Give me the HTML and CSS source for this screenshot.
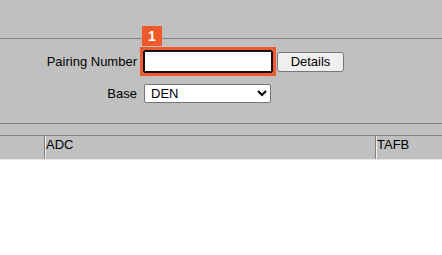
FILE: index.html
```html
<!DOCTYPE html>
<html lang="en">
<head>
    <meta charset="UTF-8">
    <meta name="viewport" content="width=device-width, initial-scale=1.0">
    <title>Pairing Lookup</title>
    <link rel="stylesheet" href="styles.css">
</head>
<body>

    <div class="top-bar"></div>

    <form class="pairing-form">
        <label for="pairing" class="form-label">Pairing Number</label>
        <div class="form-field">
            <div class="highlight">
                <span class="step-badge">1</span>
                <input type="text" id="pairing" name="pairing" class="pairing-input">
            </div>
            <button type="button" class="details-button">Details</button>
        </div>
        <label for="base" class="form-label">Base</label>
        <div class="form-field">
            <select id="base" name="base" class="base-select">
                <option value="DEN">DEN</option>
            </select>
        </div>
    </form>

    <div class="divider"></div>

    <div class="grid-header">
        <div class="col col-first"></div>
        <div class="col col-adc">ADC</div>
        <div class="col col-tafb">TAFB</div>
    </div>

    <div class="grid-body"></div>

</body>
</html>
```

FILE: styles.css
```css
body {
    margin: 0;
    padding: 0;
    font-family: Arial, "Liberation Sans", sans-serif;
    font-size: 13px;
    background-color: #ffffff;
}

.top-bar {
    height: 38px;
    background-color: #c0c0c0;
    border-bottom: 1px solid #808080;
}

.pairing-form {
    display: grid;
    grid-template-columns: 137px auto;
    column-gap: 7px;
    row-gap: 8px;
    align-items: center;
    background-color: #c0c0c0;
    padding: 8px 0 20px 0;
    margin: 0;
}

.form-label {
    text-align: right;
    color: #000;
}

.form-field {
    display: flex;
    align-items: center;
    gap: 1px;
}

.highlight {
    position: relative;
    margin-left: -4px;
    border: 3px solid #ee5a29;
    display: flex;
}

.step-badge {
    position: absolute;
    left: -1px;
    top: -24px;
    width: 20px;
    height: 20px;
    background-color: #ee5a29;
    color: #ffffff;
    font-weight: bold;
    font-size: 14px;
    line-height: 20px;
    text-align: center;
}

.pairing-input {
    box-sizing: border-box;
    width: 130px;
    height: 23px;
    padding: 0;
    margin: 0;
    border: 2px solid #101010;
    border-radius: 2px;
    background-color: #ffffff;
    outline: none;
}

.details-button {
    box-sizing: border-box;
    width: 67px;
    height: 20px;
    padding: 0;
    font-family: Arial, "Liberation Sans", sans-serif;
    font-size: 13px;
    color: #000;
    background-color: #efefef;
    border: 1px solid #767676;
    border-radius: 3px;
}

.base-select {
    box-sizing: border-box;
    width: 127px;
    height: 19px;
    padding: 0 2px;
    margin: 0;
    font-family: Arial, "Liberation Sans", sans-serif;
    font-size: 13px;
    color: #000;
    background-color: #ffffff;
    border: 1px solid #767676;
    border-radius: 2px;
}

.divider {
    height: 11px;
    background-color: #c0c0c0;
    border-top: 1px solid #808080;
}

.grid-header {
    display: flex;
    height: 23px;
    background-color: #c0c0c0;
    border-top: 1px solid #808080;
    border-bottom: 1px solid #e6e6e6;
}

.col {
    padding: 1px 1px 1px 0;
    color: #000;
}

.col-first {
    width: 43px;
    border-right: 1px solid #808080;
}

.col-adc {
    width: 328px;
    border-left: 1px solid #f0f0f0;
    border-right: 1px solid #808080;
}

.col-tafb {
    flex: 1;
    border-left: 1px solid #f0f0f0;
}

.grid-body {
    height: 100px;
    background-color: #ffffff;
}
```
